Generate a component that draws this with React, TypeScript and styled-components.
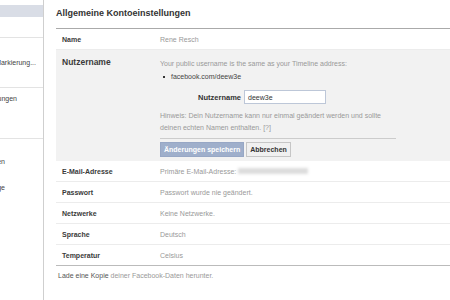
import React from "react";
import styled, { createGlobalStyle } from "styled-components";

const Global = createGlobalStyle`
  html, body { margin: 0; padding: 0; background: #fff; }
  body { font-family: "Liberation Sans", Arial, sans-serif; width: 450px; height: 300px; overflow: hidden; }
`;

const Page = styled.div`
  display: flex;
  width: 450px;
  height: 300px;
  overflow: hidden;
`;

const Sidebar = styled.div`
  width: 43px;
  flex: none;
  border-right: 1px solid #cfcfcf;
  display: flex;
  flex-direction: column;
  overflow: hidden;
`;

const SideSection = styled.div<{ $h?: number; $pt: number }>`
  display: flex;
  flex-direction: column;
  gap: 14px;
  padding-top: ${(p) => p.$pt}px;
  height: ${(p) => (p.$h ? `${p.$h}px` : "auto")};
  border-bottom: ${(p) => (p.$h ? "1px solid #e3e3e3" : "none")};
  box-sizing: border-box;
  flex: none;
`;

const SideItem = styled.div<{ $active?: boolean; $pr: number }>`
  height: 12px;
  display: flex;
  align-items: center;
  justify-content: flex-end;
  padding-right: ${(p) => p.$pr}px;
  white-space: nowrap;
  overflow: hidden;
  font-size: 7px;
  color: #444;
  background: ${(p) => (p.$active ? "#d9dde6" : "transparent")};
`;

const Main = styled.div`
  flex: 1;
  padding-left: 12px;
  display: flex;
  flex-direction: column;
`;

const TitleBar = styled.div`
  height: 29px;
  border-bottom: 1px solid #aaaaaa;
  display: flex;
  align-items: center;
  padding-bottom: 2px;
  box-sizing: border-box;
  font-size: 9px;
  font-weight: bold;
  color: #333;
`;

const Row = styled.div<{ $last?: boolean }>`
  height: 21px;
  display: flex;
  align-items: center;
  border-bottom: 1px solid ${(p) => (p.$last ? "#bbbbbb" : "#ececec")};
  box-sizing: border-box;
`;

const Label = styled.div<{ $big?: boolean }>`
  width: 104px;
  flex: none;
  padding-left: 6px;
  box-sizing: border-box;
  font-size: ${(p) => (p.$big ? 8.5 : 7)}px;
  font-weight: bold;
  color: #3a3a3a;
`;

const Value = styled.div`
  font-size: 7px;
  color: #999;
  display: flex;
  align-items: center;
`;

const Blur = styled.span`
  display: inline-block;
  width: 70px;
  height: 6px;
  margin-left: 2px;
  background: #dcdcdc;
  filter: blur(1.5px);
`;

const Panel = styled.div`
  background: #f2f2f2;
  display: flex;
  height: 111px;
  padding-top: 7px;
  box-sizing: border-box;
`;

const PanelBody = styled.div`
  width: 236px;
  display: flex;
  flex-direction: column;
`;

const Info = styled.div`
  font-size: 7px;
  color: #999;
  margin-top: 2px;
  line-height: 10px;
`;

const Bullet = styled.div`
  display: flex;
  align-items: center;
  gap: 6px;
  font-size: 7px;
  color: #444;
  margin-top: 4px;
  padding-left: 3px;
  &::before {
    content: "";
    width: 2px;
    height: 2px;
    background: #333;
  }
`;

const InputRow = styled.div`
  display: flex;
  align-items: center;
  gap: 3px;
  margin-top: 10px;
`;

const InputLabel = styled.div`
  width: 81px;
  text-align: right;
  font-size: 7.5px;
  font-weight: bold;
  color: #333;
`;

const Input = styled.div`
  width: 82px;
  height: 14px;
  background: #fff;
  border: 1px solid #bdc7d8;
  box-sizing: border-box;
  font-size: 7px;
  color: #333;
  display: flex;
  align-items: center;
  padding-left: 3px;
`;

const Hint = styled.div`
  font-size: 7px;
  color: #999;
  line-height: 12px;
  margin-top: 6px;
  padding-bottom: 4px;
  border-bottom: 1px solid #cccccc;
`;

const Buttons = styled.div`
  display: flex;
  gap: 2px;
  margin-top: 3px;
`;

const Button = styled.div<{ $primary?: boolean }>`
  height: 15px;
  padding: 0 3px;
  display: flex;
  align-items: center;
  box-sizing: border-box;
  font-size: 7px;
  font-weight: bold;
  color: ${(p) => (p.$primary ? "#fff" : "#333")};
  background: ${(p) => (p.$primary ? "#9fafcb" : "#f0f0f0")};
  border: 1px solid ${(p) => (p.$primary ? "#97a7c5" : "#c6c6c6")};
`;

const Footer = styled.div`
  font-size: 7px;
  color: #999;
  padding: 6px 0 0 2px;
  b {
    font-weight: normal;
    color: #555;
  }
`;

const rows = [
  { label: "E-Mail-Adresse", value: "email" },
  { label: "Passwort", value: "Passwort wurde nie geändert." },
  { label: "Netzwerke", value: "Keine Netzwerke." },
  { label: "Sprache", value: "Deutsch" },
  { label: "Temperatur", value: "Celsius" },
];

export default function App() {
  return (
    <>
      <Global />
      <Page>
        <Sidebar>
          <SideSection $h={38} $pt={5}>
            <SideItem $active $pr={4} />
          </SideSection>
          <SideSection $h={50} $pt={18}>
            <SideItem $pr={7}>Chronik und Markierung...</SideItem>
          </SideSection>
          <SideSection $h={51} $pt={4}>
            <SideItem $pr={26}>Benachrichtigungen</SideItem>
          </SideSection>
          <SideSection $pt={16}>
            <SideItem $pr={38}>Abonnenten</SideItem>
            <SideItem $pr={38}>Apps und Werbeanzeige</SideItem>
          </SideSection>
        </Sidebar>
        <Main>
          <TitleBar>Allgemeine Kontoeinstellungen</TitleBar>
          <Row>
            <Label>Name</Label>
            <Value>Rene Resch</Value>
          </Row>
          <Panel>
            <Label $big>Nutzername</Label>
            <PanelBody>
              <Info>Your public username is the same as your Timeline address:</Info>
              <Bullet>facebook.com/deew3e</Bullet>
              <InputRow>
                <InputLabel>Nutzername</InputLabel>
                <Input>deew3e</Input>
              </InputRow>
              <Hint>
                Hinweis: Dein Nutzername kann nur einmal geändert werden und sollte
                <br />
                deinen echten Namen enthalten. [?]
              </Hint>
              <Buttons>
                <Button $primary>Änderungen speichern</Button>
                <Button>Abbrechen</Button>
              </Buttons>
            </PanelBody>
          </Panel>
          {rows.map((r, i) => (
            <Row key={r.label} $last={i === rows.length - 1}>
              <Label>{r.label}</Label>
              <Value>
                {r.value === "email" ? (
                  <>
                    Primäre E-Mail-Adresse:
                    <Blur />
                  </>
                ) : (
                  r.value
                )}
              </Value>
            </Row>
          ))}
          <Footer>
            <b>Lade eine Kopie</b> deiner Facebook-Daten herunter.
          </Footer>
        </Main>
      </Page>
    </>
  );
}
